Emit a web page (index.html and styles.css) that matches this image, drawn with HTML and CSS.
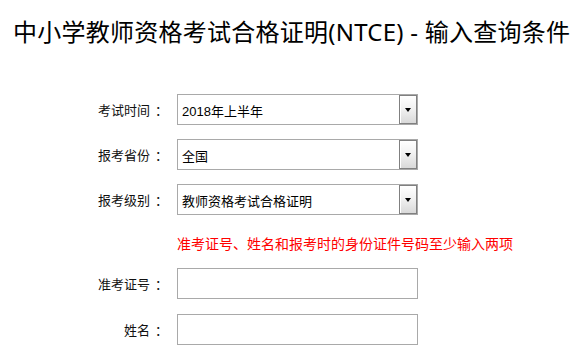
FILE: index.html
```html
<!DOCTYPE html>
<html lang="zh-CN">
<head>
<meta charset="utf-8">
<title>中小学教师资格考试合格证明(NTCE) - 输入查询条件</title>
<link rel="stylesheet" href="styles.css">
</head>
<body>
<h1 class="title">中小学教师资格考试合格证明(NTCE) - 输入查询条件</h1>
<div class="form">
  <div class="row">
    <span class="label">考试时间<span class="colon">：</span></span>
    <div class="select"><span class="value">2018年上半年</span><span class="btn"><span class="arrow"></span></span></div>
  </div>
  <div class="row">
    <span class="label">报考省份<span class="colon">：</span></span>
    <div class="select"><span class="value">全国</span><span class="btn"><span class="arrow"></span></span></div>
  </div>
  <div class="row">
    <span class="label">报考级别<span class="colon">：</span></span>
    <div class="select"><span class="value">教师资格考试合格证明</span><span class="btn"><span class="arrow"></span></span></div>
  </div>
  <div class="note">准考证号、姓名和报考时的身份证件号码至少输入两项</div>
  <div class="row">
    <span class="label">准考证号<span class="colon">：</span></span>
    <div class="input"></div>
  </div>
  <div class="row">
    <span class="label">姓名<span class="colon">：</span></span>
    <div class="input"></div>
  </div>
</div>
</body>
</html>
```
FILE: styles.css
```css
html, body {
  margin: 0;
  padding: 0;
  background: #fff;
}
body {
  font-family: "Liberation Sans", "Noto Sans CJK SC", sans-serif;
  color: #000;
  overflow: hidden;
}
.title {
  margin: 0;
  padding: 17px 0 0 13px;
  font-family: "Noto Sans", "Noto Sans CJK SC", sans-serif;
  font-weight: normal;
  font-size: 24px;
  letter-spacing: 0.25px;
  line-height: 30px;
  white-space: nowrap;
}
.form {
  display: flex;
  flex-direction: column;
  margin-top: 47px;
}
.row {
  display: flex;
  align-items: center;
  margin-bottom: 14px;
}
.label {
  width: 168px;
  margin-right: 9px;
  text-align: right;
  font-size: 13px;
  line-height: 18px;
  font-family: "Noto Sans CJK SC", sans-serif;
  color: #111;
}
.colon {
  margin-left: 5px;
}
.select {
  box-sizing: border-box;
  width: 241px;
  height: 31px;
  border: 1px solid #a9a9a9;
  display: flex;
  align-items: flex-end;
  justify-content: space-between;
}
.value {
  padding: 0 0 3px 4px;
  font-size: 13px;
  line-height: 18px;
}
.btn {
  box-sizing: border-box;
  width: 18px;
  height: 100%;
  border: 1px solid #808080;
  box-shadow: inset 1px 1px 0 #fff;
  background: linear-gradient(#ffffff, #f2f2f2 45%, #d9d9d9);
  display: flex;
  align-items: center;
  justify-content: center;
}
.arrow {
  width: 0;
  height: 0;
  border-top: 4px solid #000;
  border-left: 3.5px solid transparent;
  border-right: 3.5px solid transparent;
}
.note {
  margin: 4px 0 15px 177px;
  color: #ff0000;
  font-size: 14px;
  line-height: 20px;
  font-family: "Noto Sans CJK SC", sans-serif;
}
.input {
  box-sizing: border-box;
  width: 241px;
  height: 31px;
  border: 1px solid #a9a9a9;
}
.row:last-child {
  margin-bottom: 0;
}
.note + .row {
  margin-bottom: 15px;
}
```
